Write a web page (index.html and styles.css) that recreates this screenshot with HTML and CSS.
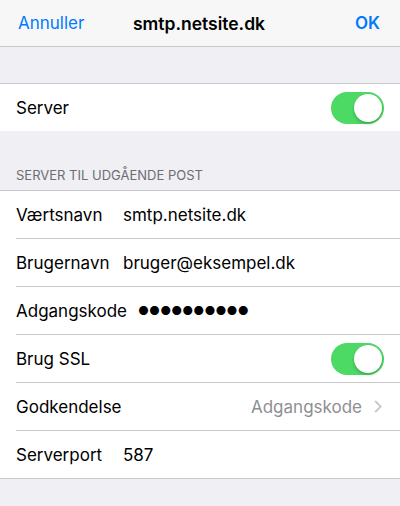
FILE: index.html
```html
<!DOCTYPE html>
<html lang="da">
<head>
    <meta charset="UTF-8">
    <meta name="viewport" content="width=device-width, initial-scale=1.0">
    <title>smtp.netsite.dk</title>
    <link rel="stylesheet" href="styles.css">
</head>
<body>

    <header class="navbar">
        <a href="#" class="nav-btn">Annuller</a>
        <h1>smtp.netsite.dk</h1>
        <a href="#" class="nav-btn done">OK</a>
    </header>

    <div class="group first">
        <div class="row">
            <span class="label">Server</span>
            <span class="switch on"></span>
        </div>
    </div>

    <h2 class="group-title">SERVER TIL UDGÅENDE POST</h2>
    <div class="group">
        <div class="row">
            <span class="label">Værtsnavn</span>
            <span class="value">smtp.netsite.dk</span>
        </div>
        <div class="row">
            <span class="label">Brugernavn</span>
            <span class="value">bruger@eksempel.dk</span>
        </div>
        <div class="row">
            <span class="label">Adgangskode</span>
            <span class="value secret">●●●●●●●●●●</span>
        </div>
        <div class="row">
            <span class="label">Brug SSL</span>
            <span class="switch on"></span>
        </div>
        <div class="row link">
            <span class="label">Godkendelse</span>
            <span class="detail">Adgangskode</span>
            <svg class="chevron" width="8" height="13" viewBox="0 0 8 13">
                <path d="M1.2 1l5.5 5.5-5.5 5.5" fill="none" stroke="#c7c7cc" stroke-width="1.8"/>
            </svg>
        </div>
        <div class="row">
            <span class="label">Serverport</span>
            <span class="value">587</span>
        </div>
    </div>

</body>
</html>
```

FILE: styles.css
```css
body {
    margin: 0;
    font-family: Inter, "Noto Sans", sans-serif;
    font-size: 17px;
    color: #000;
    background-color: #efeff4;
}

/* top bar: cancel / title / done */
.navbar {
    display: grid;
    grid-template-columns: 1fr auto 1fr;
    align-items: center;
    height: 46px;
    padding: 0 20px 0 18px;
    background-color: #f7f7f7;
    border-bottom: 1px solid #c8c7cc;
}

.navbar h1 {
    margin: 0;
    font-size: 17.5px;
    font-weight: 600;
}

.nav-btn {
    color: #007aff;
    text-decoration: none;
}

.nav-btn.done {
    justify-self: end;
    font-weight: 600;
}

.group {
    background-color: #fff;
    border-top: 1px solid #c8c7cc;
    border-bottom: 1px solid #c8c7cc;
}

.group.first {
    margin-top: 36px;
    border-bottom: none;
}

.group-title {
    margin: 0;
    padding: 36px 16px 7px;
    font-size: 13px;
    line-height: 16px;
    font-weight: 400;
    color: #6d6d72;
}

.row {
    display: flex;
    align-items: center;
    height: 47px;
    margin-left: 16px;
    padding-right: 16px;
    border-bottom: 1px solid #c8c7cc;
}

.row:last-child {
    border-bottom: none;
}

.label {
    min-width: 96px;
    margin-right: 11px;
    white-space: nowrap;
}

.value {
    flex: 1;
}

.secret {
    font-size: 12px;
    letter-spacing: 0.1px;
}

.detail {
    flex: 1;
    text-align: right;
    color: #8e8e93;
}

.chevron {
    margin-left: 12px;
    margin-right: 2px;
}

.switch {
    position: relative;
    margin-left: auto;
    width: 53px;
    height: 32px;
    border-radius: 16px;
    background-color: #4cd964;
}

.switch::after {
    content: "";
    position: absolute;
    top: 2px;
    right: 2px;
    width: 28px;
    height: 28px;
    border-radius: 50%;
    background-color: #fff;
    box-shadow: 0 2px 3px rgba(0, 0, 0, 0.2), 0 0 0 0.5px rgba(0, 0, 0, 0.06);
}
```
